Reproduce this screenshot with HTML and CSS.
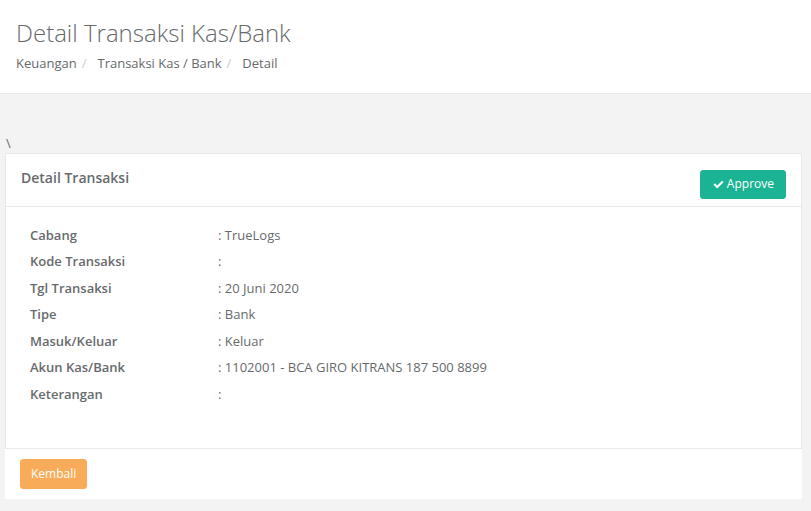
FILE: index.html
```html
<!DOCTYPE html>
<html>
<head>
<meta charset="utf-8">
<link rel="stylesheet" href="styles.css">
</head>
<body>
<div class="page-heading">
  <h2 class="page-title">Detail Transaksi Kas/Bank</h2>
  <ol class="breadcrumb">
    <li>Keuangan</li>
    <li class="sep">/</li>
    <li>Transaksi Kas / Bank</li>
    <li class="sep">/</li>
    <li>Detail</li>
  </ol>
</div>
<div class="wrapper">
  <div class="stray">\</div>
  <div class="ibox">
    <div class="ibox-title">
      <h5 class="ibox-heading">Detail Transaksi</h5>
      <button class="btn btn-primary"><svg class="icon" viewBox="0 0 12 12" width="11" height="11"><path d="M0.5 6.3 L2.2 4.6 L4.6 7 L9.8 1.8 L11.5 3.5 L4.6 10.4 Z" fill="#fff"/></svg>Approve</button>
    </div>
    <div class="ibox-content">
      <div class="detail-grid">
        <div class="label">Cabang</div><div class="value">: TrueLogs</div>
        <div class="label">Kode Transaksi</div><div class="value">:</div>
        <div class="label">Tgl Transaksi</div><div class="value">: 20 Juni 2020</div>
        <div class="label">Tipe</div><div class="value">: Bank</div>
        <div class="label">Masuk/Keluar</div><div class="value">: Keluar</div>
        <div class="label">Akun Kas/Bank</div><div class="value">: 1102001 - BCA GIRO KITRANS 187 500 8899</div>
        <div class="label">Keterangan</div><div class="value">:</div>
      </div>
    </div>
    <div class="ibox-footer">
      <button class="btn btn-warning">Kembali</button>
    </div>
  </div>
</div>
</body>
</html>
```
FILE: styles.css
```css
* { box-sizing: border-box; }
html, body {
  margin: 0;
  padding: 0;
  height: 100%;
}
body {
  background: #f3f3f4;
  font-family: "Open Sans", "Liberation Sans", sans-serif;
  font-size: 13px;
  color: #676a6c;
  overflow: hidden;
}
.page-heading {
  background: #fff;
  border-bottom: 1px solid #e7eaec;
  padding: 20px 16px 20px;
}
.page-title {
  margin: 0 0 8px;
  font-size: 24px;
  font-weight: 300;
  line-height: 26.4px;
  color: #676a6c;
}
.breadcrumb {
  list-style: none;
  margin: 0;
  padding: 0;
  display: flex;
  line-height: 18.6px;
}
.breadcrumb .sep {
  color: #ccc;
  padding: 0 11px 0 5px;
}
.wrapper {
  padding: 40px 9px 0 5px;
}
.stray {
  line-height: 18.6px;
  padding-left: 1px;
}
.ibox {
  background: #fff;
}
.ibox-title {
  display: flex;
  justify-content: space-between;
  align-items: flex-start;
  padding: 15px 15px 7px;
  border: 1px solid #e7eaec;
}
.ibox-heading {
  margin: 0;
  font-size: 14px;
  font-weight: 600;
  line-height: 18px;
}
.btn {
  font-family: inherit;
  font-size: 12px;
  line-height: 18px;
  padding: 5px 10px;
  border-radius: 3px;
  border: 1px solid transparent;
  color: #fff;
  display: inline-flex;
  align-items: center;
  height: 30px;
}
.btn-primary {
  background: #1ab394;
  border-color: #1ab394;
  margin-top: 1px;
  height: 29px;
  padding: 5px 11px 5px 12px;
}
.btn-warning {
  background: #f8ac59;
  border-color: #f8ac59;
  height: 30px;
  padding: 5px 10px;
}
.icon {
  margin-right: 3px;
}
.ibox-content {
  border: 1px solid #e7eaec;
  border-top: 0;
  padding: 15px 24px 41px;
}
.detail-grid {
  display: grid;
  grid-template-columns: 188px 1fr;
  grid-auto-rows: 26.5px;
  align-items: center;
}
.label {
  font-weight: 600;
}
.ibox-footer {
  padding: 10px 15px;
}
```
